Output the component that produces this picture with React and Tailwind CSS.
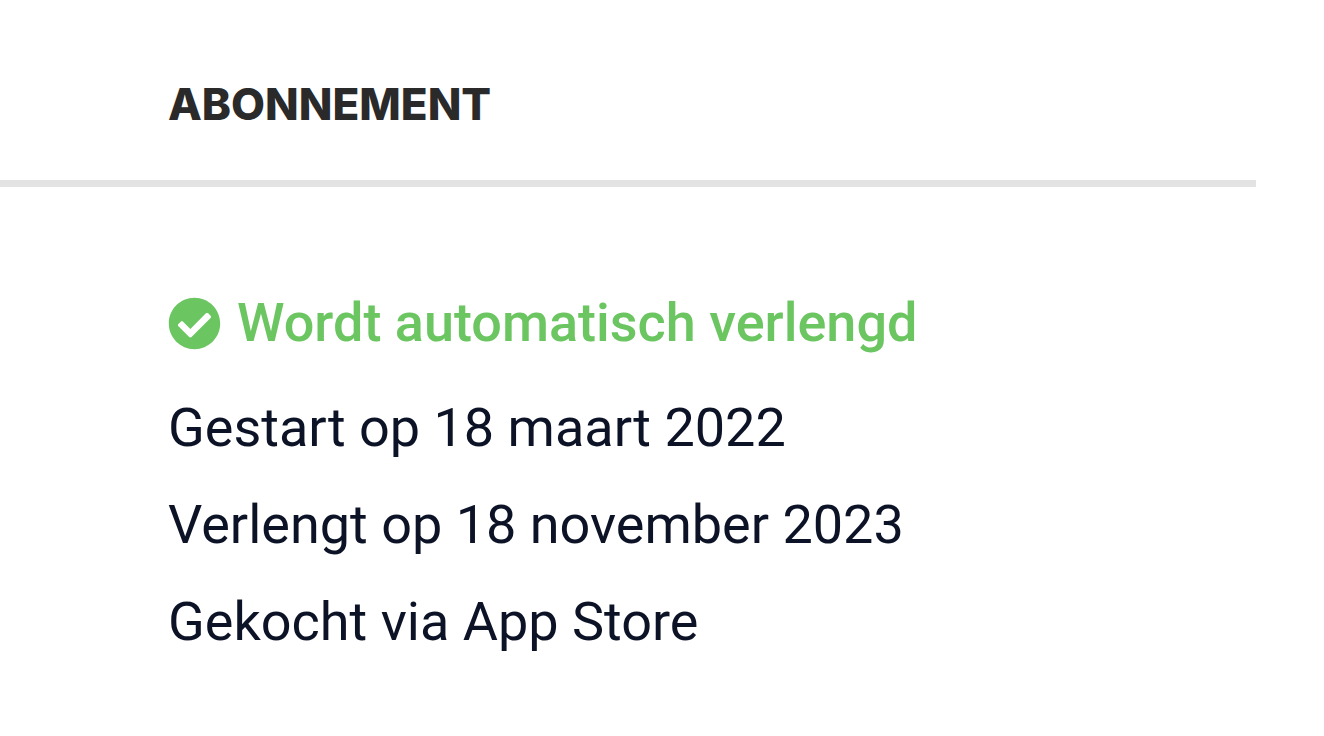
import { FaCheckCircle } from 'react-icons/fa'

const details = [
  'Gestart op 18 maart 2022',
  'Verlengt op 18 november 2023',
  'Gekocht via App Store',
]

export default function App() {
  return (
    <main className="min-h-screen bg-white font-['Roboto',sans-serif] text-[#0d1326]">
      <section className="mr-[68px]">
        <header className="border-b-[7px] border-[#e3e3e3] pt-[76px] pb-[48px] pl-[168px]">
          <h2 className="font-['Inter',sans-serif] text-[44px] leading-[56px] font-extrabold text-[#2a2a2a] uppercase">
            Abonnement
          </h2>
        </header>

        <div className="pt-[92px] pb-8 pl-[168px] text-[54px] leading-[97px]">
          <p className="mb-3 flex items-center gap-4 leading-[88px] font-medium text-[#6bc560]">
            <FaCheckCircle className="size-[53px] shrink-0" aria-hidden="true" />
            Wordt automatisch verlengd
          </p>
          <ul>
            {details.map((detail) => (
              <li key={detail}>{detail}</li>
            ))}
          </ul>
        </div>
      </section>
    </main>
  )
}
